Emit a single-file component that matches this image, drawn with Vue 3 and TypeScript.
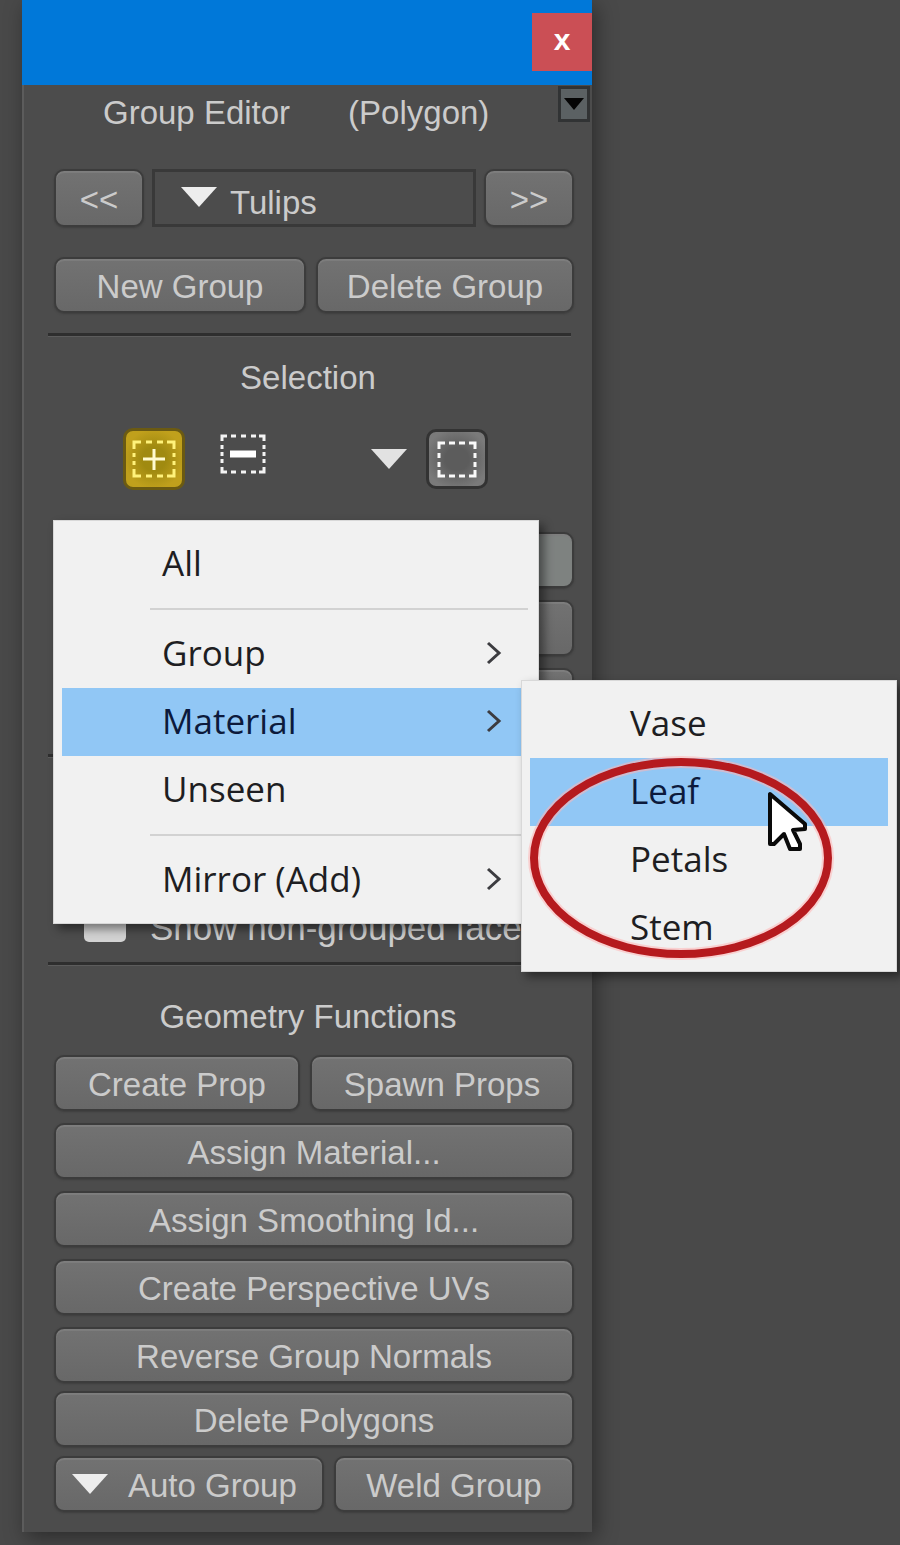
<script setup lang="ts">
import { ref } from 'vue'

interface MenuEntry {
  label: string
  submenu?: boolean
  separatorAfter?: boolean
}

const groups: string[] = ['Tulips']
const group = ref('Tulips')
const showNonGrouped = ref(false)
const mode = ref<'add' | 'remove'>('add')

const menu: MenuEntry[] = [
  { label: 'All', separatorAfter: true },
  { label: 'Group', submenu: true },
  { label: 'Material', submenu: true },
  { label: 'Unseen', separatorAfter: true },
  { label: 'Mirror (Add)', submenu: true },
]
const openEntry = ref('Material')

const materials: string[] = ['Vase', 'Leaf', 'Petals', 'Stem']
const activeMaterial = ref('Leaf')

const geometryActions: string[] = [
  'Assign Material...',
  'Assign Smoothing Id...',
  'Create Perspective UVs',
  'Reverse Group Normals',
]
</script>

<template>
  <main class="desktop">
    <section class="panel" aria-label="Group Editor">
      <div class="titlebar">
        <button class="close" type="button" aria-label="Close">x</button>
      </div>

      <div class="body">
        <header class="header">
          <span>Group Editor</span>
          <span>(Polygon)</span>
          <button class="options" type="button" aria-label="Panel options">
            <svg width="20" height="12" viewBox="0 0 20 12"><path d="M0 0H20L10 12Z" fill="#050505" /></svg>
          </button>
        </header>

        <div class="row picker">
          <button class="btn" type="button" aria-label="Previous group">&lt;&lt;</button>
          <label class="field">
            <svg class="tri" viewBox="0 0 36 20"><path d="M0 0H36L18 20Z" fill="#ededed" /></svg>
            <select v-model="group" aria-label="Current group">
              <option v-for="name in groups" :key="name">{{ name }}</option>
            </select>
          </label>
          <button class="btn" type="button" aria-label="Next group">&gt;&gt;</button>
        </div>

        <div class="row pair-new">
          <button class="btn" type="button">New Group</button>
          <button class="btn" type="button">Delete Group</button>
        </div>

        <hr class="rule rule-top" />

        <h2 class="heading">Selection</h2>

        <div class="tools">
          <button class="tool add" type="button" aria-label="Add to selection" @click="mode = 'add'">
            <svg width="44" height="38" viewBox="0 0 44 38" fill="none" stroke="#fff27a" stroke-width="3">
              <path d="M2 9V2H9M35 2H42V9M42 29V36H35M9 36H2V29" />
              <path d="M14 2H20M25 2H31M14 36H20M25 36H31M2 13V17M2 21V25M42 13V17M42 21V25" />
              <path d="M22 9V30M11 19H33" stroke="#fffbd0" />
            </svg>
          </button>
          <button class="tool remove" type="button" aria-label="Remove from selection" @click="mode = 'remove'">
            <svg width="46" height="40" viewBox="0 0 46 40" fill="none" stroke="#f4f4f4" stroke-width="3">
              <path d="M2 7V2H7M39 2H44V7M44 33V38H39M7 38H2V33" />
              <path d="M11 2H16M21 2H26M31 2H36M11 38H16M21 38H26M31 38H36M2 11V15M2 18V22M2 25V29M44 11V15M44 18V22M44 25V29" />
              <path d="M10 20H36" stroke="#fff" stroke-width="7" />
            </svg>
          </button>
          <svg class="tri" viewBox="0 0 36 20"><path d="M0 0H36L18 20Z" fill="#e2e2e2" /></svg>
          <button class="tool marquee" type="button" aria-label="Marquee selection">
            <svg width="40" height="37" viewBox="0 0 40 37" fill="none" stroke="#fafafa" stroke-width="3">
              <path d="M2 8V2H8M32 2H38V8M38 29V35H32M8 35H2V29" />
              <path d="M12 2H18M22 2H28M12 35H18M22 35H28M2 12V17M2 21V26M38 12V17M38 21V26" />
            </svg>
          </button>
        </div>

        <div class="selection-area">
          <div class="stack">
            <button class="btn lit" type="button" aria-label="Add"></button>
            <button class="btn" type="button" aria-label="Remove"></button>
            <button class="btn" type="button" aria-label="Invert"></button>
          </div>
          <hr class="rule rule-mid" />
          <label class="check">
            <input v-model="showNonGrouped" type="checkbox" />
            <span>Show non-grouped faces</span>
          </label>

          <div class="menu" role="menu" aria-label="Add to selection">
            <template v-for="entry in menu" :key="entry.label">
              <button
                class="item"
                :class="{ active: entry.label === openEntry }"
                type="button"
                role="menuitem"
                @click="openEntry = entry.label"
              >
                <span>{{ entry.label }}</span>
                <svg v-if="entry.submenu" width="16" height="24" viewBox="0 0 16 24" fill="none" stroke="#3c3c40" stroke-width="3">
                  <path d="M2 2L13 12L2 22" />
                </svg>
              </button>
              <div v-if="entry.separatorAfter" class="separator" role="separator"></div>
            </template>

            <div class="menu submenu" role="menu" aria-label="Material">
              <button
                v-for="name in materials"
                :key="name"
                class="item"
                :class="{ active: name === activeMaterial }"
                type="button"
                role="menuitem"
                @click="activeMaterial = name"
              >
                <span>{{ name }}</span>
              </button>
              <svg class="ring" viewBox="0 0 306 204" aria-hidden="true">
                <ellipse cx="153" cy="102" rx="147" ry="96" fill="none" stroke="#ffb4b4" stroke-opacity="0.55" stroke-width="12" />
                <ellipse cx="153" cy="102" rx="147" ry="96" fill="none" stroke="#b51a1e" stroke-width="8" />
              </svg>
              <svg class="cursor" viewBox="0 0 40 62" aria-hidden="true">
                <path d="M2 3V53H6L16 43L22 58H32V53L25 39L37 38V33Z" fill="#fff" stroke="#0a0a0a" stroke-width="4" stroke-linejoin="round" />
              </svg>
            </div>
          </div>
        </div>

        <hr class="rule" />

        <h2 class="heading geometry">Geometry Functions</h2>

        <div class="stack">
          <div class="row pair-prop">
            <button class="btn" type="button">Create Prop</button>
            <button class="btn" type="button">Spawn Props</button>
          </div>
          <button v-for="action in geometryActions" :key="action" class="btn" type="button">{{ action }}</button>
        </div>
        <div class="stack tight">
          <button class="btn" type="button">Delete Polygons</button>
          <div class="row pair-auto">
            <button class="btn with-tri" type="button">
              <svg class="tri" viewBox="0 0 36 20"><path d="M0 0H36L18 20Z" fill="#ededed" /></svg>
              <span>Auto Group</span>
            </button>
            <button class="btn" type="button">Weld Group</button>
          </div>
        </div>
      </div>
    </section>
  </main>
</template>

<style>
html,
body {
  background: #484848;
}
</style>

<style scoped>
* {
  box-sizing: border-box;
}

.desktop {
  display: grid;
  grid-template-columns: 22px minmax(0, 570fr) 308fr;
  min-height: 100vh;
  overflow: hidden;
  background: #494949;
  font-family: 'Liberation Sans', Arial, sans-serif;
  font-size: 33px;
  line-height: 40px;
  color: #cbcbcb;
}

button,
select {
  margin: 0;
  font: inherit;
  color: inherit;
}

.panel {
  grid-column: 2;
  align-self: start;
  background: #4c4c4c;
  box-shadow: 4px 6px 20px rgba(0, 0, 0, 0.4);
}

.titlebar {
  display: flex;
  justify-content: flex-end;
  height: 85px;
  padding-top: 13px;
  background: #0078d9;
}

.close {
  width: 60px;
  height: 58px;
  padding: 0 0 4px;
  border: 0;
  background: #cb4f55;
  color: #fff;
  font-size: 30px;
  font-weight: bold;
}

.body {
  padding: 0 18px 20px 30px;
  border-left: 2px solid #5c5c5c;
}

.header {
  position: relative;
  display: flex;
  align-items: center;
  gap: 58px;
  height: 56px;
  margin-bottom: 28px;
  padding-left: 49px;
}

.options {
  position: absolute;
  top: 1px;
  right: -16px;
  display: flex;
  align-items: center;
  justify-content: center;
  width: 32px;
  height: 36px;
  padding: 0;
  border: 3px solid #313334;
  background: #5b6163;
}

.row {
  display: grid;
  gap: 10px;
}

.picker {
  grid-template-columns: 90px minmax(0, 1fr) 90px;
  gap: 8px;
  margin-bottom: 30px;
}

.pair-new {
  grid-template-columns: minmax(0, 252fr) minmax(0, 258fr);
}

.pair-prop {
  grid-template-columns: minmax(0, 246fr) minmax(0, 264fr);
}

.pair-auto {
  grid-template-columns: minmax(0, 270fr) minmax(0, 240fr);
}

.btn {
  height: 56px;
  padding: 4px 0 0;
  border: 2px solid #3c3c3c;
  border-radius: 10px;
  background: linear-gradient(#727272, #686868);
  box-shadow: inset 0 2px 1px #7e7e7e, 0 1px 2px #3e3e3e;
  text-align: center;
  white-space: nowrap;
}

.btn.lit {
  background: #7e8280;
}

.tri {
  flex: none;
  width: 36px;
  height: 20px;
}

.with-tri {
  display: flex;
  align-items: center;
  gap: 20px;
  padding-left: 16px;
}

.with-tri .tri {
  margin-bottom: 4px;
}

.field {
  position: relative;
  display: block;
  height: 58px;
  border: 3px solid #393939;
}

.field .tri {
  position: absolute;
  top: 15px;
  left: 26px;
  pointer-events: none;
}

.field select {
  display: block;
  width: 100%;
  height: 100%;
  padding: 10px 0 0 75px;
  border: 0;
  background: none;
  appearance: none;
}

.picker .btn {
  height: 58px;
}

.rule {
  height: 4px;
  margin: 0 3px 0 -6px;
  border: 0;
  border-top: 3px solid #2e2e2e;
  background: #5c5c5c;
}

.rule-top {
  margin-top: 20px;
}

.rule-mid {
  margin-top: 30px;
}

.heading {
  margin: 21px 0 30px;
  padding-right: 12px;
  font-size: 33px;
  font-weight: normal;
  text-align: center;
}

.tools {
  display: flex;
  align-items: center;
  height: 62px;
  padding-left: 69px;
}

.tool {
  display: flex;
  align-items: center;
  justify-content: center;
  padding: 0;
  border: 3px solid #333;
  border-radius: 10px;
}

.tool svg {
  flex: none;
}

.add {
  width: 62px;
  height: 62px;
  border-color: #6b5a12;
  background: radial-gradient(#a08a10 30%, #c0a01c 75%);
}

.remove {
  width: 46px;
  height: 50px;
  margin-left: 35px;
  padding-bottom: 10px;
  border: 0;
  background: none;
}

.tools > .tri {
  margin-left: 105px;
}

.marquee {
  width: 62px;
  height: 60px;
  margin-left: 19px;
  background: radial-gradient(#5c5c5c 30%, #7a7a7a 80%);
}

.selection-area {
  position: relative;
  height: 430px;
  margin-top: 42px;
}

.stack {
  display: grid;
  gap: 12px;
}

.tight {
  gap: 9px;
  margin-top: 8px;
}

.check {
  display: flex;
  align-items: center;
  gap: 24px;
  margin-top: 150px;
  padding-left: 30px;
  font-size: 35px;
  white-space: nowrap;
}

.check input {
  flex: none;
  width: 42px;
  height: 34px;
  margin: 0 0 6px;
  appearance: none;
  border-radius: 5px;
  background: #d2d2d2;
}

.menu {
  position: absolute;
  z-index: 1;
  top: -12px;
  right: 35px;
  left: -1px;
  padding: 9px 8px;
  border: 1px solid #d8d8d8;
  background: #f1f1f1;
  box-shadow: 5px 5px 9px rgba(0, 0, 0, 0.45);
  font-family: 'Open Sans', 'Noto Sans', sans-serif;
  font-size: 35px;
  color: #1e1e22;
}

.item {
  display: flex;
  align-items: center;
  justify-content: space-between;
  width: 100%;
  height: 68px;
  padding: 0 28px 2px 100px;
  border: 0;
  background: none;
  text-align: left;
}

.item.active {
  background: #91c7f5;
  color: #0c1a3c;
}

.separator {
  height: 2px;
  margin: 10px 2px 10px 88px;
  background: #d2d2d2;
}

.submenu {
  top: 159px;
  right: auto;
  left: calc(100% - 17px);
  width: 376px;
}

.ring {
  position: absolute;
  top: 75px;
  left: 6px;
  width: 306px;
  height: 204px;
  pointer-events: none;
}

.cursor {
  position: absolute;
  top: 110px;
  left: 246px;
  width: 40px;
  height: 62px;
  pointer-events: none;
}

.geometry {
  margin: 31px 0 18px;
}
</style>
